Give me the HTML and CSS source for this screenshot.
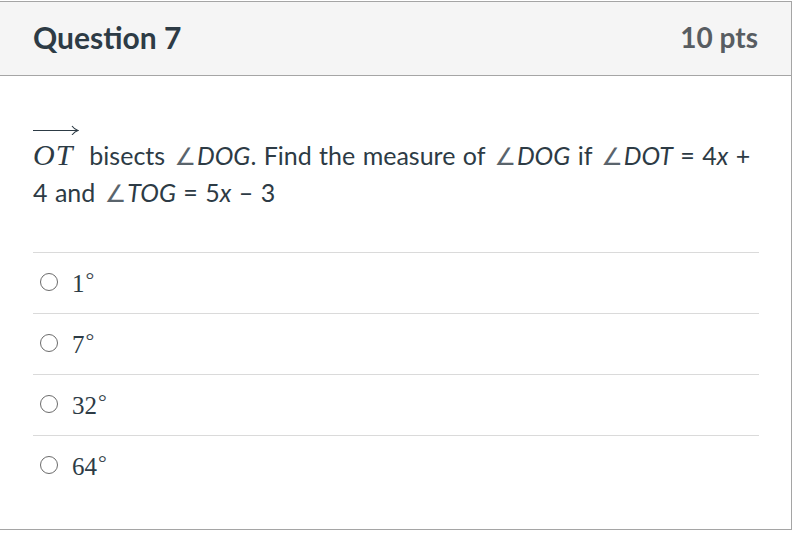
FILE: index.html
```html
<!DOCTYPE html>
<html>
<head>
<meta charset="utf-8">
<link rel="stylesheet" href="styles.css">
</head>
<body>
<div class="card">
  <div class="header">
    <div class="title">Question 7</div>
    <div class="pts">10 pts</div>
  </div>
  <div class="content">
    <p class="question"><span class="ray">OT<svg class="arrow" width="46" height="10" viewBox="0 0 46 10"><path d="M0 5.5 H44" stroke="#2d3b45" stroke-width="1.2" fill="none"/><path d="M39 1 Q41.5 4.5 45 5.5 Q41.5 6.5 39 10" stroke="#2d3b45" stroke-width="1.1" fill="none"/></svg></span><span class="gap"></span>bisects <span class="ang">∠</span><i>DOG</i>. Find the measure of <span class="ang">∠</span><i>DOG</i> if <span class="ang">∠</span><i>DOT</i> = 4<i>x</i> + 4 and <span class="ang">∠</span><i>TOG</i> = 5<i>x</i> – 3</p>
    <div class="answers">
      <div class="answer"><span class="radio"></span><span class="val">1<span class="deg">°</span></span></div>
      <div class="answer"><span class="radio"></span><span class="val">7<span class="deg">°</span></span></div>
      <div class="answer"><span class="radio"></span><span class="val">32<span class="deg">°</span></span></div>
      <div class="answer"><span class="radio"></span><span class="val">64<span class="deg">°</span></span></div>
    </div>
  </div>
</div>
</body>
</html>
```

FILE: styles.css
```css
html, body {
  margin: 0;
  padding: 0;
  background: #ffffff;
}
body {
  padding-top: 1px;
  font-family: Lato, "Liberation Sans", sans-serif;
  color: #2d3b45;
}
.card {
  margin-left: -1px;
  width: 793px;
  box-sizing: border-box;
  border: 1px solid #a5a5a5;
  background: #fff;
}
.header {
  height: 73px;
  background: #f5f5f5;
  border-bottom: 1px solid #a5a5a5;
  display: flex;
  align-items: center;
  justify-content: space-between;
  padding: 0 33px 0 33px;
}
.title {
  font-size: 30px;
  font-weight: 700;
  color: #2d3b45;
  padding-bottom: 3px;
}
.pts {
  font-size: 28px;
  font-weight: 700;
  color: #585d62;
  padding-bottom: 3px;
}
.content {
  padding: 61px 32px 33px 33px;
}
.question {
  margin: 0;
  font-size: 25px;
  line-height: 37px;
  word-spacing: 1px;
  color: #2d3b45;
}
.question i {
  font-style: italic;
}
.ang {
  font-family: "DejaVu Sans", sans-serif;
  font-size: 24px;
  line-height: 20px;
  color: #5a646c;
  margin: 0 1px 0 2px;
}
.ray {
  position: relative;
  display: inline-block;
  font-family: "Liberation Serif", serif;
  font-style: italic;
  font-size: 30px;
  line-height: 20px;
  letter-spacing: 1px;
  word-spacing: 0;
}
.gap {
  display: inline-block;
  width: 16px;
}
.arrow {
  position: absolute;
  left: 0;
  top: -20px;
}
.answers {
  margin-top: 41px;
}
.answer {
  height: 60px;
  border-top: 1px solid #dadada;
  display: flex;
  align-items: center;
  padding-left: 7px;
}
.radio {
  width: 16px;
  height: 16px;
  border: 1.5px solid #6b6b6b;
  border-radius: 50%;
  flex: none;
  margin-bottom: 2px;
}
.val {
  margin-left: 14px;
  font-family: "Liberation Serif", serif;
  font-size: 25px;
  line-height: 30px;
  color: #2d3b45;
  padding-top: 2px;
}
.deg {
  font-size: 22px;
  line-height: 0;
  position: relative;
  top: -5px;
  margin-left: 1px;
  color: #3d4850;
}
```
